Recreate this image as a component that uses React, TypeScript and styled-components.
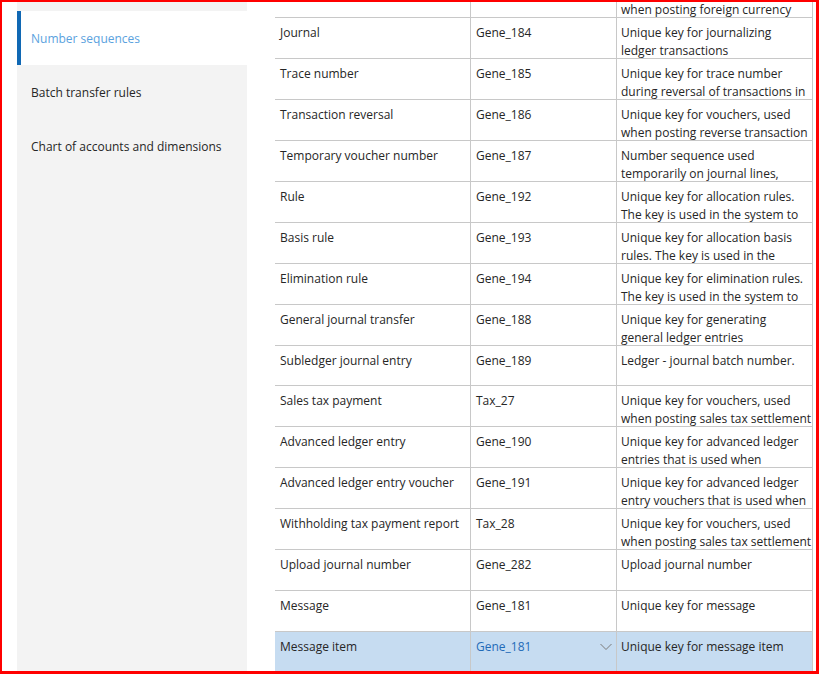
import React from "react";
import styled, { createGlobalStyle } from "styled-components";

const GlobalStyle = createGlobalStyle`
  html, body { margin: 0; padding: 0; background: #ffffff; }
  body { font-family: "Open Sans", "Noto Sans", sans-serif; }
  * { box-sizing: border-box; }
`;

const Frame = styled.div`
  width: 819px;
  height: 674px;
  border-style: solid;
  border-color: #ff0000;
  border-width: 2px 3px 3px 2px;
  display: flex;
  overflow: hidden;
  background: #ffffff;
`;

const Nav = styled.nav`
  width: 230px;
  margin-left: 15px;
  background: #f3f3f3;
  padding-top: 9px;
  display: flex;
  flex-direction: column;
  flex-shrink: 0;
`;

const NavItem = styled.div<{ $active?: boolean }>`
  height: 54px;
  display: flex;
  align-items: center;
  padding-left: 10px;
  padding-top: 1px;
  font-size: 12px;
  color: ${(p) => (p.$active ? "#5aa2de" : "#262626")};
  background: ${(p) => (p.$active ? "#ffffff" : "transparent")};
  border-left: 4px solid ${(p) => (p.$active ? "#1068b4" : "transparent")};
`;

const GridArea = styled.div`
  margin-left: 28px;
  width: 538px;
  height: 100%;
  overflow: hidden;
  border-right: 1px solid #c8c8c8;
`;

const Grid = styled.div`
  margin-top: -25px;
  display: flex;
  flex-direction: column;
`;

const Row = styled.div<{ $selected?: boolean; $h?: number }>`
  display: grid;
  grid-template-columns: 196px 146px 1fr;
  height: ${(p) => p.$h ?? 41}px;
  border-bottom: 1px solid #c8c8c8;
  background: ${(p) => (p.$selected ? "#c6dcf1" : "#ffffff")};
  font-size: 12px;
  color: #262626;
`;

const Cell = styled.div<{ $link?: boolean; $last?: boolean }>`
  position: relative;
  padding: 6px 5px 0 5px;
  border-right: ${(p) => (p.$last ? "none" : "1px solid #c8c8c8")};
  overflow: hidden;
  line-height: 18px;
  color: ${(p) => (p.$link ? "#1f6bb8" : "#262626")};
  white-space: nowrap;
`;

const CodeCell = styled(Cell)`
  padding-left: 5px;
`;

const DescCell = styled(Cell)`
  padding-left: 4px;
`;

const Line = styled.div`
  height: 18px;
`;

const Chevron = styled.svg`
  position: absolute;
  right: 4px;
  top: 11px;
`;

type RowData = { name: string; code: string; desc: string[]; h?: number };

const rows: RowData[] = [
  { name: "", code: "", desc: ["", "when posting foreign currency"] },
  { name: "Journal", code: "Gene_184", desc: ["Unique key for journalizing", "ledger transactions"] },
  { name: "Trace number", code: "Gene_185", desc: ["Unique key for trace number", "during reversal of transactions in"] },
  { name: "Transaction reversal", code: "Gene_186", desc: ["Unique key for vouchers, used", "when posting reverse transaction"] },
  { name: "Temporary voucher number", code: "Gene_187", desc: ["Number sequence used", "temporarily on journal lines,"] },
  { name: "Rule", code: "Gene_192", desc: ["Unique key for allocation rules.", "The key is used in the system to"] },
  { name: "Basis rule", code: "Gene_193", desc: ["Unique key for allocation basis", "rules. The key is used in the"] },
  { name: "Elimination rule", code: "Gene_194", desc: ["Unique key for elimination rules.", "The key is used in the system to"] },
  { name: "General journal transfer", code: "Gene_188", desc: ["Unique key for generating", "general ledger entries"] },
  { name: "Subledger journal entry", code: "Gene_189", desc: ["Ledger - journal batch number."], h: 40 },
  { name: "Sales tax payment", code: "Tax_27", desc: ["Unique key for vouchers, used", "when posting sales tax settlement"] },
  { name: "Advanced ledger entry", code: "Gene_190", desc: ["Unique key for advanced ledger", "entries that is used when"] },
  { name: "Advanced ledger entry voucher", code: "Gene_191", desc: ["Unique key for advanced ledger", "entry vouchers that is used when"] },
  { name: "Withholding tax payment report", code: "Tax_28", desc: ["Unique key for vouchers, used", "when posting sales tax settlement"] },
  { name: "Upload journal number", code: "Gene_282", desc: ["Upload journal number"] },
  { name: "Message", code: "Gene_181", desc: ["Unique key for message"] },
];

export default function App() {
  return (
    <>
      <GlobalStyle />
      <Frame>
        <Nav>
          <NavItem $active>Number sequences</NavItem>
          <NavItem>Batch transfer rules</NavItem>
          <NavItem>Chart of accounts and dimensions</NavItem>
        </Nav>
        <GridArea>
          <Grid>
            {rows.map((r, i) => (
              <Row key={i} $h={r.h}>
                <Cell>{r.name}</Cell>
                <CodeCell>{r.code}</CodeCell>
                <DescCell $last>
                  {r.desc.map((d, j) => (
                    <Line key={j}>{d}</Line>
                  ))}
                </DescCell>
              </Row>
            ))}
            <Row $selected>
              <Cell>Message item</Cell>
              <CodeCell $link>
                Gene_181
                <Chevron width="12" height="8" viewBox="0 0 12 8">
                  <polyline points="0.5,1 6,6.5 11.5,1" fill="none" stroke="#7a7a7a" strokeWidth="1" />
                </Chevron>
              </CodeCell>
              <DescCell $last>Unique key for message item</DescCell>
            </Row>
          </Grid>
        </GridArea>
      </Frame>
    </>
  );
}
